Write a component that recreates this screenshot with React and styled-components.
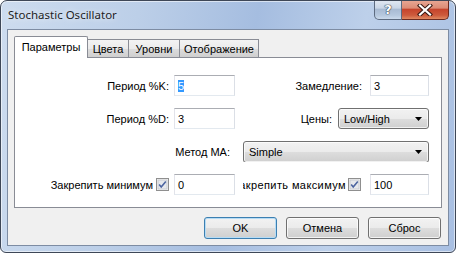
import React from 'react';
import styled, { createGlobalStyle, css } from 'styled-components';

const GlobalStyle = createGlobalStyle`
  html, body {
    margin: 0;
    padding: 0;
    background: #ffffff;
  }
  * {
    box-sizing: border-box;
  }
`;

const Window = styled.div`
  width: 456px;
  height: 253px;
  display: flex;
  flex-direction: column;
  border: 1px solid #3e4757;
  border-radius: 7px 7px 6px 6px;
  background: linear-gradient(100deg, #cddcef 0%, #bccfe8 28%, #a5bde0 52%, #bdd0ea 74%, #a8bfe2 100%);
  box-shadow: inset 0 0 0 1px rgba(255, 255, 255, 0.55);
  overflow: hidden;
  font-family: "Liberation Sans", Arial, sans-serif;
  font-size: 11px;
  color: #000;
`;

const TitleBar = styled.div`
  height: 28px;
  display: flex;
  align-items: flex-start;
  justify-content: space-between;
  padding: 0 0 0 7px;
`;

const Title = styled.div`
  font-family: "Noto Sans", "Liberation Sans", sans-serif;
  font-size: 11.5px;
  line-height: 28px;
  color: #1e1e1e;
  text-shadow: 0 0 6px rgba(255, 255, 255, 0.9);
`;

const Caption = styled.div`
  display: flex;
  margin-right: 6px;
  margin-top: -1px;
`;

const CaptionButton = styled.div`
  height: 20px;
  display: flex;
  align-items: center;
  justify-content: center;
  border: 1px solid #5d6b80;
  border-top: none;
  ${p => p.kind === 'close' ? css`
    width: 47px;
    border-color: #6b2a20;
    border-left: none;
    border-radius: 0 0 5px 0;
    background: linear-gradient(#e9a996 0%, #dc8c76 42%, #c6452d 50%, #cd5a3c 80%, #e08a62 100%);
  ` : css`
    width: 28px;
    border-radius: 0 0 0 5px;
    background: linear-gradient(#e3e9f2 0%, #cad6e6 42%, #a9bbd3 50%, #b6c8de 80%, #cbdaec 100%);
  `}
`;

const HelpGlyph = styled.span`
  font-family: "DejaVu Sans", sans-serif;
  font-weight: bold;
  font-size: 13px;
  color: #fff;
  text-shadow: 0 0 1px #2c3848, 0 0 1px #2c3848, 0 0 1px #2c3848;
`;

const Client = styled.div`
  flex: 1;
  margin: 0 6px 6px;
  border: 1px solid #7d8ca3;
  background: #f0f0f0;
  padding: 6px 6px 0 6px;
  display: flex;
  flex-direction: column;
`;

const TabStrip = styled.div`
  display: flex;
  align-items: flex-end;
  height: 21px;
  position: relative;
  z-index: 1;
`;

const Tab = styled.div`
  width: ${p => p.width}px;
  border: 1px solid #898c95;
  border-bottom: none;
  white-space: nowrap;
  text-align: center;
  ${p => p.active ? css`
    height: 22px;
    margin-bottom: -1px;
    padding-top: 4px;
    background: #fff;
    border-radius: 2px 2px 0 0;
    position: relative;
    z-index: 1;
  ` : css`
    height: 18px;
    padding-top: 3px;
    margin-left: -1px;
    background: linear-gradient(#f3f3f3 0%, #ebebeb 50%, #dddddd 51%, #cfcfcf 100%);
  `}
`;

const Panel = styled.div`
  height: 151px;
  border: 1px solid #898c95;
  background: #fff;
  padding: 17px 0 0 0;
`;

const Form = styled.div`
  display: grid;
  grid-template-columns: 154px 61px 125px 59px;
  grid-auto-rows: 21px;
  column-gap: 5px;
  row-gap: 12px;
`;

const Cell = styled.div`
  display: flex;
  align-items: center;
  justify-content: ${p => (p.align === 'start' ? 'flex-start' : 'flex-end')};
  gap: ${p => p.gap || 0}px;
  grid-column: ${p => p.span || 'auto'};
  white-space: nowrap;
  overflow: hidden;
  margin-left: ${p => p.inset || 0}px;
  padding-right: ${p => p.pad || 0}px;
  & > * {
    flex-shrink: 0;
  }
`;

/* the original label control is narrower than its text, so the first letter is cut */
const WideText = styled.span`
  letter-spacing: 0.4px;
`;

const TextBox = styled.div`
  width: ${p => p.width || 61}px;
  height: 21px;
  border: 1px solid #abadb3;
  border-left-color: #e2e3ea;
  border-right-color: #dbdfe6;
  border-bottom-color: #e3e9ef;
  background: #fff;
  padding: 0 3px;
  display: flex;
  align-items: center;
`;

const Selected = styled.span`
  background: #3399ff;
  color: #fff;
`;

const Combo = styled.div`
  width: ${p => p.width}px;
  height: ${p => p.height || 21}px;
  margin-left: ${p => p.offset || 0}px;
  border: 1px solid #707070;
  border-radius: 3px;
  background: linear-gradient(#f2f2f2 0%, #ebebeb 50%, #dddddd 51%, #cfcfcf 100%);
  box-shadow: inset 0 0 0 1px rgba(255, 255, 255, 0.7);
  display: flex;
  align-items: center;
  justify-content: space-between;
  padding: 0 6px 0 5px;
`;

const Arrow = () => (
  <svg width="7" height="4" viewBox="0 0 7 4">
    <path d="M0 0h7L3.5 4z" fill="#000" />
  </svg>
);

const Check = () => (
  <svg width="13" height="13" viewBox="0 0 13 13">
    <rect x="0.5" y="0.5" width="12" height="12" fill="#f4f4f4" stroke="#8f8f8f" />
    <rect x="2" y="2" width="9" height="9" fill="#e6e8ec" stroke="#c3c6cc" strokeWidth="0.8" />
    <path d="M3.2 6.6 L5.2 8.9 L9.8 3.4" fill="none" stroke="#4c64a0" strokeWidth="1.6" />
  </svg>
);

const ButtonRow = styled.div`
  display: flex;
  justify-content: flex-end;
  gap: 9px;
  margin-top: 9px;
  padding-right: 1px;
`;

const Button = styled.div`
  width: 73px;
  height: 22px;
  display: flex;
  align-items: center;
  justify-content: center;
  border: 1px solid ${p => (p.primary ? '#3c7fb1' : '#707070')};
  border-radius: 3px;
  background: linear-gradient(#f2f2f2 0%, #ebebeb 50%, #dddddd 51%, #cfcfcf 100%);
  box-shadow: inset 0 0 0 1px ${p => (p.primary ? '#b6dcf5' : 'rgba(255, 255, 255, 0.75)')};
`;

export default function App() {
  return (
    <>
      <GlobalStyle />
      <Window>
        <TitleBar>
          <Title>Stochastic Oscillator</Title>
          <Caption>
            <CaptionButton kind="help">
              <HelpGlyph>?</HelpGlyph>
            </CaptionButton>
            <CaptionButton kind="close">
              <svg width="16" height="12" viewBox="0 0 16 12">
                <path d="M3 1.5 L13 10.5 M13 1.5 L3 10.5" stroke="#3a1a14" strokeWidth="4.2" strokeLinecap="square" />
                <path d="M3 1.5 L13 10.5 M13 1.5 L3 10.5" stroke="#ffffff" strokeWidth="2.2" strokeLinecap="square" />
              </svg>
            </CaptionButton>
          </Caption>
        </TitleBar>
        <Client>
          <TabStrip>
            <Tab active width={74}>Параметры</Tab>
            <Tab width={42}>Цвета</Tab>
            <Tab width={52}>Уровни</Tab>
            <Tab width={80}>Отображение</Tab>
          </TabStrip>
          <Panel>
            <Form>
              <Cell>Период %K:</Cell>
              <TextBox><Selected>5</Selected></TextBox>
              <Cell pad={3}>Замедление:</Cell>
              <TextBox width={59}>3</TextBox>

              <Cell>Период %D:</Cell>
              <TextBox>3</TextBox>
              <Cell span="3 / 5" gap={6}>
                Цены:
                <Combo width={91}>Low/High<Arrow /></Combo>
              </Cell>

              <Cell span="1 / 3" pad={5}>Метод МА:</Cell>
              <Cell span="3 / 5" align="start">
                <Combo width={186} height={22} offset={3}>Simple<Arrow /></Combo>
              </Cell>

              <Cell gap={3}>Закрепить минимум<Check /></Cell>
              <TextBox>0</TextBox>
              <Cell gap={2} pad={4} inset={3}><WideText>Закрепить максимум</WideText><Check /></Cell>
              <TextBox width={59}>100</TextBox>
            </Form>
          </Panel>
          <ButtonRow>
            <Button primary>OK</Button>
            <Button>Отмена</Button>
            <Button>Сброс</Button>
          </ButtonRow>
        </Client>
      </Window>
    </>
  );
}
